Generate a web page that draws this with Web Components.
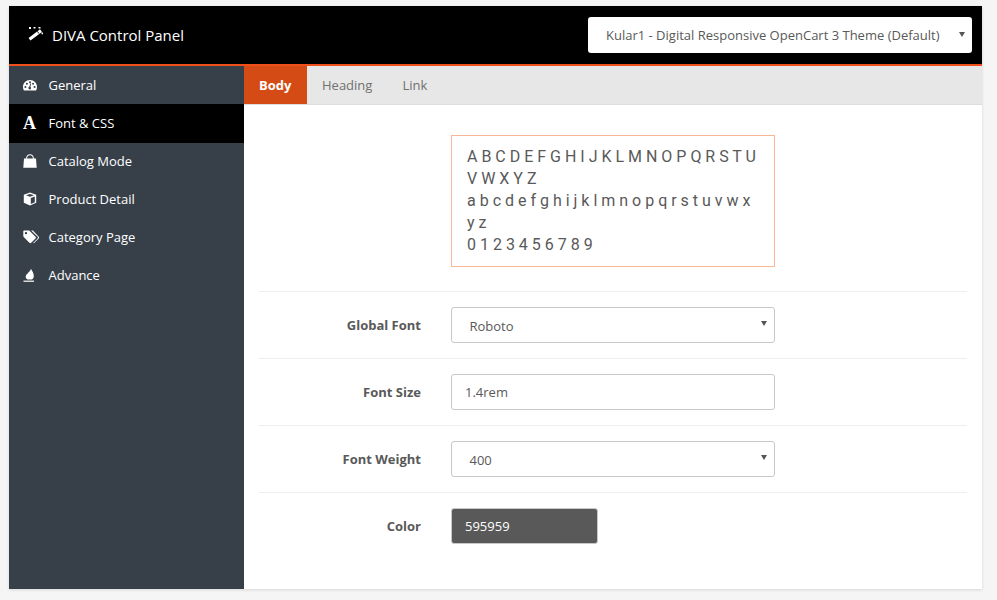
<!DOCTYPE html>
<html>
<head>
<meta charset="utf-8">
<title>DIVA Control Panel</title>
<style>
  html, body { margin: 0; height: 100%; }
  body { background: #f5f5f5; font-family: "Open Sans", "Liberation Sans", sans-serif; font-size: 13px; color: #595959; overflow: hidden; }
</style>
</head>
<body>

<diva-panel>
  <diva-header slot="header" title-text="DIVA Control Panel" theme="Kular1 - Digital Responsive OpenCart 3 Theme (Default)"></diva-header>
  <diva-nav-item slot="nav" icon="gauge">General</diva-nav-item>
  <diva-nav-item slot="nav" icon="font" active>Font &amp; CSS</diva-nav-item>
  <diva-nav-item slot="nav" icon="bag">Catalog Mode</diva-nav-item>
  <diva-nav-item slot="nav" icon="cube">Product Detail</diva-nav-item>
  <diva-nav-item slot="nav" icon="tags">Category Page</diva-nav-item>
  <diva-nav-item slot="nav" icon="fire">Advance</diva-nav-item>

  <diva-tab slot="tabs" active>Body</diva-tab>
  <diva-tab slot="tabs">Heading</diva-tab>
  <diva-tab slot="tabs">Link</diva-tab>

  <font-preview></font-preview>
  <diva-field label="Global Font"><diva-select>Roboto</diva-select></diva-field>
  <diva-field label="Font Size"><diva-input>1.4rem</diva-input></diva-field>
  <diva-field label="Font Weight"><diva-select>400</diva-select></diva-field>
  <diva-field label="Color"><diva-input swatch>595959</diva-input></diva-field>
</diva-panel>

<script>
const ICONS = {
  gauge: '<path fill="#fff" fill-rule="evenodd" d="M7 2C3.1 2 0 5.1 0 9c0 1.200.3 2.300.8 3.200.1.200.3.300.5.300h11.400c.2 0 .4-.1.5-.3.5-.9.8-2 .8-3.200 0-3.900-3.100-7-7-7zM2.400 10a1 1 0 1 1 0-2 1 1 0 0 1 0 2zm1.500-3.300a1 1 0 1 1 0-2 1 1 0 0 1 0 2zM7 5.200a1 1 0 1 1 0-2 1 1 0 0 1 0 2zm0 6.300a1.500 1.500 0 0 1-.6-2.900l.9-3.200.9.3-.9 3.100a1.500 1.500 0 0 1-.3 2.700zm3.100-4.800a1 1 0 1 1 0-2 1 1 0 0 1 0 2zm1.500 3.300a1 1 0 1 1 0-2 1 1 0 0 1 0 2z"/>',
  bag: '<path fill="#fff" d="M1 4.500h2.200V3.800C3.200 1.700 4.900.2 7 .2s3.800 1.500 3.800 3.600v.7H13l.7 9.300H.3L1 4.500zm3.200 0h5.600v-.7C9.800 2.300 8.500 1.200 7 1.200S4.200 2.300 4.200 3.800v.7z"/>',
  cube: '<path fill="#fff" d="M7 .5l6.200 2.300v8L7 13.600.8 10.800v-8L7 .5zM7 1.900L3 3.300l4 1.500 4-1.500-4-1.400zM7.800 12l4-1.800V4.600L7.800 6.100V12z"/>',
  tags: '<path fill="#fff" fill-rule="evenodd" d="M.3 1.300C.3.800.7.500 1.200.500H5.600c.4 0 .8.200 1.100.4l5.800 5.800c.5.5.5 1.300 0 1.800l-4.300 4.300c-.5.5-1.300.5-1.800 0L.7 6.900C.4 6.600.3 6.200.3 5.800V1.300zM3 4.300a1.200 1.200 0 1 0 0-2.400 1.200 1.200 0 0 0 0 2.400z"/><path fill="#fff" d="M8.100.5h1.200c.4 0 .8.200 1.100.4l5.300 5.800c.5.5.5 1.300 0 1.800l-4.300 4.300c-.4.4-.9.4-1.300.3l4.500-4.600c.5-.5.5-1.300 0-1.800L8.100.5z"/>',
  fire: '<path fill="#fff" d="M8 .8c1 2.200 2.800 4.200 2.800 7.200 0 1.800-.8 2.900-2 3.500H4.500C3 10.800 2.500 9.500 2.800 8 3.300 6 7 4 8 .8z"/><rect x=".5" y="12.600" width="10.500" height="1.200" fill="#fff"/>'
};

const panelTemplate = document.createElement('template');
panelTemplate.innerHTML = `
  <style>
    :host { display: flex; flex-direction: column; width: 973px; height: 583px; margin: 6px 0 0 9px; background: #fff; box-shadow: 0 1px 3px rgba(0,0,0,.12); }
    .body { flex: 1; display: flex; min-height: 0; }
    nav { width: 235px; flex: none; background: #374049; }
    main { flex: 1; min-width: 0; display: flex; flex-direction: column; }
    .tabs { display: flex; height: 38px; background: #e7e7e7; border-bottom: 1px solid #ddd; }
    .content { padding: 30px 15px 0; }
  </style>
  <slot name="header"></slot>
  <div class="body">
    <nav><slot name="nav"></slot></nav>
    <main>
      <div class="tabs"><slot name="tabs"></slot></div>
      <div class="content"><slot></slot></div>
    </main>
  </div>
`;
class DivaPanel extends HTMLElement {
  constructor() {
    super();
    this.attachShadow({mode: 'open'}).appendChild(panelTemplate.content.cloneNode(true));
  }
}
customElements.define('diva-panel', DivaPanel);

class DivaHeader extends HTMLElement {
  constructor() {
    super();
    const root = this.attachShadow({mode: 'open'});
    root.innerHTML = `
      <style>
        :host { display: flex; align-items: center; justify-content: space-between; height: 58px; background: #000; border-bottom: 2px solid #f1501b; padding: 0 10px 0 19px; }
        .brand { display: flex; align-items: center; gap: 9px; color: #fff; font-size: 15px; }
        svg { display: block; margin-bottom: 2px; }
        .theme { width: 384px; height: 36px; box-sizing: border-box; background: #fff; border-radius: 3px; color: #595959; font-size: 13px; display: flex; align-items: center; padding-left: 18px; position: relative; }
        .arrow { position: absolute; right: 7px; top: 15px; width: 0; height: 0; border: 3px solid transparent; border-top: 5px solid #555; border-bottom: 0; }
      </style>
      <div class="brand">
        <svg width="15" height="14" viewBox="0 0 15 14"><path d="M1.500 12.200L13 3.600" stroke="#fff" stroke-width="3.200"/><path d="M9.300 4.300l1.700 2.300" stroke="#000" stroke-width=".9"/><path fill="#fff" d="M1 0h2v2H1zM5.500 0h2v1.500h-2zM10.500 0h2v1.500h-2zM13.500 5.500H15v1.800h-1.500z"/></svg>
        <span></span>
      </div>
      <div class="theme"><span></span><i class="arrow"></i></div>
    `;
    root.querySelector('.brand span').textContent = this.getAttribute('title-text');
    root.querySelector('.theme span').textContent = this.getAttribute('theme');
  }
}
customElements.define('diva-header', DivaHeader);

class DivaNavItem extends HTMLElement {
  constructor() {
    super();
    const icon = this.getAttribute('icon');
    const glyph = icon === 'font'
      ? '<span class="a">A</span>'
      : `<svg width="16" height="14" viewBox="0 0 16 14">${ICONS[icon]}</svg>`;
    this.attachShadow({mode: 'open'}).innerHTML = `
      <style>
        :host { display: flex; align-items: center; height: 38px; box-sizing: content-box; padding-left: 14px; color: #fff; font-size: 13px; }
        :host([active]) { background: #000; padding-bottom: 1px; margin-bottom: -1px; position: relative; }
        .i { width: 25.500px; display: flex; align-items: center; flex: none; }
        svg { display: block; }
        .a { font: bold 18px/14px "Liberation Serif", serif; }
      </style>
      <span class="i">${glyph}</span><slot></slot>
    `;
  }
}
customElements.define('diva-nav-item', DivaNavItem);

class DivaTab extends HTMLElement {
  constructor() {
    super();
    this.attachShadow({mode: 'open'}).innerHTML = `
      <style>
        :host { display: flex; align-items: center; padding: 0 15px; height: 38px; color: #707070; font-size: 13px; }
        :host([active]) { box-sizing: border-box; width: 63px; background: #d54b16; color: #fff; font-weight: 700; }
      </style>
      <slot></slot>
    `;
  }
}
customElements.define('diva-tab', DivaTab);

class FontPreview extends HTMLElement {
  constructor() {
    super();
    this.attachShadow({mode: 'open'}).innerHTML = `
      <style>
        :host { display: block; width: 324px; box-sizing: border-box; margin: 0 0 24px 192px; padding: 10px 15px; border: 1px solid #f8b796; font: 400 16px/22px Roboto, sans-serif; color: #595959; }
      </style>
      A B C D E F G H I J K L M N O P Q R S T U V W X Y Z<br>
      a b c d e f g h i j k l m n o p q r s t u v w x y z<br>
      0 1 2 3 4 5 6 7 8 9
    `;
  }
}
customElements.define('font-preview', FontPreview);

class DivaField extends HTMLElement {
  constructor() {
    super();
    const root = this.attachShadow({mode: 'open'});
    root.innerHTML = `
      <style>
        :host { display: flex; align-items: center; gap: 30px; padding: 15px 0; border-top: 1px solid #eee; }
        label { width: 162px; text-align: right; font-weight: 700; font-size: 13px; color: #595959; flex: none; }
      </style>
      <label></label><slot></slot>
    `;
    root.querySelector('label').textContent = this.getAttribute('label');
  }
}
customElements.define('diva-field', DivaField);

class DivaSelect extends HTMLElement {
  constructor() {
    super();
    this.attachShadow({mode: 'open'}).innerHTML = `
      <style>
        :host { display: flex; align-items: center; position: relative; width: 324px; height: 36px; box-sizing: border-box; border: 1px solid #c8c8c8; border-radius: 3px; padding: 2px 0 0 17.500px; font-size: 13px; color: #595959; }
        i { position: absolute; right: 7px; top: 13px; width: 0; height: 0; border: 3px solid transparent; border-top: 5px solid #555; border-bottom: 0; }
      </style>
      <slot></slot><i></i>
    `;
  }
}
customElements.define('diva-select', DivaSelect);

class DivaInput extends HTMLElement {
  constructor() {
    super();
    this.attachShadow({mode: 'open'}).innerHTML = `
      <style>
        :host { display: flex; align-items: center; width: 324px; height: 36px; box-sizing: border-box; border: 1px solid #c8c8c8; border-radius: 3px; padding-left: 13px; font-size: 13px; color: #595959; }
        :host([swatch]) { width: 147px; background: #595959; color: #fff; }
      </style>
      <slot></slot>
    `;
  }
}
customElements.define('diva-input', DivaInput);
</script>
</body>
</html>
